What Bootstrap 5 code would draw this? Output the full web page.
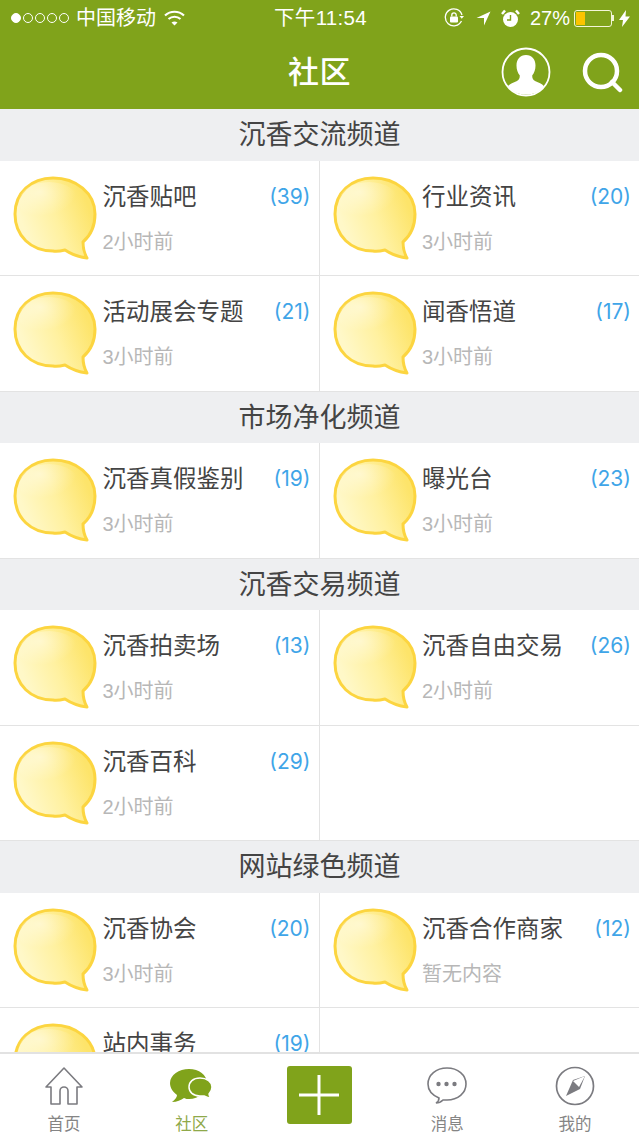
<!DOCTYPE html>
<html lang="zh">
<head>
    <meta charset="UTF-8">
    <meta name="viewport" content="width=device-width, initial-scale=1.0">
    <title>社区</title>
    <link href="https://cdn.jsdelivr.net/npm/bootstrap@5.3.3/dist/css/bootstrap.min.css" rel="stylesheet">
    <style>
        html, body { height: 100%; overflow: hidden; }
        body { font-family: "Liberation Sans", "Noto Sans CJK SC", sans-serif; background: #fff; }
        .app-shell { height: 1136px; }
        .top-area { background: #80a31b; height: 109px; color: #fff; flex: none; }
        .status-line { height: 36px; padding: 0 9px 0 11px; font-size: 20px; white-space: nowrap; }
        .status-side { width: 225px; }
        .status-time { font-size: 20.500px; letter-spacing: .3px; }
        .sig-dot { width: 10px; height: 10px; border: 1px solid #fff; border-radius: 50%; margin-right: 2px; }
        .sig-dot.on { background: #fff; }
        .carrier { margin-left: 5px; }
        .batt { width: 38px; height: 17px; border: 1px solid #f3f6d8; border-radius: 3px; padding: 1px; margin-left: 4px; }
        .batt-fill { width: 27%; height: 100%; background: #fbc400; }
        .batt-tip { width: 2px; height: 6px; background: #f3f6d8; }
        .title-line { height: 73px; }
        .title-text { font-size: 31px; font-weight: 500; line-height: 1; letter-spacing: .5px; }
        .head-icons { right: 16px; top: 11px; gap: 31px; }
        .scroll-area { flex: 1 1 auto; min-height: 0; overflow: hidden; }
        .sec-head { height: 51.5px; background: #eeeff1; color: #444; font-size: 27px; line-height: 53px; text-align: center; }
        .cell { height: 115.5px; border-bottom: 1px solid #e3e3e3; padding: 15px 8px 0 13px; }
        .cell.with-line { border-right: 1px solid #e3e3e3; }
        .bubble { width: 84px; height: 84px; flex: none; margin-right: 5.500px; }
        .cell-title { font-size: 23.5px; line-height: 30px; color: #444; margin-top: 6px; white-space: nowrap; }
        .cell-count { font-family: Inter, "Liberation Sans", sans-serif; font-size: 21px; line-height: 30px; color: #3fa5e8; margin-top: 6px; }
        .cell-time { font-size: 20px; line-height: 28px; color: #b7b7b7; margin-top: 16px; }
        .tab-bar { height: 84px; flex: none; border-top: 2px solid #e2e2e2; background: #fff; padding: 12px 0 0 0; position: relative; z-index: 2; }
        .tab-item { width: 20%; color: #858585; font-size: 16.5px; line-height: 20px; text-align: center; }
        .tab-item.active { color: #8fa94a; }
        .tab-icon { height: 40px; margin-bottom: 8px; }
        .plus-btn { width: 65px; height: 58px; background: #80a31b; border-radius: 3px; }
    </style>
</head>
<body>
    <svg width="0" height="0" class="position-absolute">
        <defs>
            <linearGradient id="bubbleFill" x1="10%" y1="60%" x2="90%" y2="30%">
                <stop offset="0" stop-color="#fff8c8"/>
                <stop offset=".5" stop-color="#fff1a0"/>
                <stop offset="1" stop-color="#fde46a"/>
            </linearGradient>
            <radialGradient id="bubbleShine" cx="35%" cy="25%" r="60%">
                <stop offset="0" stop-color="#fff" stop-opacity=".45"/>
                <stop offset="1" stop-color="#fff" stop-opacity="0"/>
            </radialGradient>
            <symbol id="bubbleIcon" viewBox="0 0 84 84">
                <path d="M40 2C63 2 82 17 82 38c0 13-5 22-12 28 0 6 1 11 4 16-8-1-16-4-22-8-4 1-8 2-12 1C18 75 2 60 2 38 2 17 18 2 40 2z" fill="url(#bubbleFill)" stroke="#fcd540" stroke-width="3" stroke-linejoin="round"/>
                <ellipse cx="36" cy="26" rx="30" ry="20" fill="url(#bubbleShine)"/>
            </symbol>
        </defs>
    </svg>

    <div class="app-shell d-flex flex-column">
        <div class="top-area">
            <div class="status-line d-flex align-items-center justify-content-between">
                <div class="status-side d-flex align-items-center">
                    <span class="sig-dot on"></span><span class="sig-dot"></span><span class="sig-dot"></span><span class="sig-dot"></span><span class="sig-dot"></span>
                    <span class="carrier">中国移动</span>
                    <svg class="ms-2" width="21" height="16" viewBox="0 0 21 16" fill="none" stroke="#fff" stroke-width="2.2"><path d="M1 5.5c5.500-5 13.500-5 19 0"/><path d="M4.500 9c3.500-3 8.500-3 12 0"/><path d="M10.500 15.500l-3-3c2-1.400 4-1.400 6 0z" fill="#fff" stroke="none"/></svg>
                </div>
                <div class="status-time">下午11:54</div>
                <div class="status-side d-flex align-items-center justify-content-end">
                    <svg width="21" height="20" viewBox="0 0 21 20" fill="none" stroke="#fff" stroke-width="1.300"><path d="M17.500 13A8.500 8.500 0 1 1 18 7"/><path d="M15.500 8h4.500l-2.200 2.800z" fill="#fff" stroke="none"/><rect x="6" y="8.500" width="8" height="6" rx="1" fill="#fff" stroke="none"/><path d="M7.800 8.500V7a2.200 2.200 0 0 1 4.400 0v1.500"/></svg>
                    <svg width="15" height="15" viewBox="0 0 15 15" style="margin-left:11px"><path d="M14.500.5L8 14.500V7H.5z" fill="#fff"/></svg>
                    <svg width="19" height="19" viewBox="0 0 19 19" style="margin-left:10px"><circle cx="9.500" cy="10.500" r="7.500" fill="#fff"/><path d="M9.500 6v5H6" fill="none" stroke="#80a31b" stroke-width="1.400"/><path d="M1 5l3-3.500M18 5l-3-3.500" stroke="#fff" stroke-width="2.500"/></svg>
                    <span style="margin-left:10px">27%</span>
                    <div class="batt"><div class="batt-fill"></div></div><span class="batt-tip"></span>
                    <svg width="11" height="17" viewBox="0 0 11 17" style="margin-left:5px"><path d="M7 0L0 10h4l-1 7 8-10.500H6.500z" fill="#fff"/></svg>
                </div>
            </div>
            <div class="title-line position-relative d-flex align-items-center justify-content-center">
                <span class="title-text">社区</span>
                <div class="head-icons position-absolute d-flex align-items-center">
                    <svg width="50" height="50" viewBox="0 0 50 50"><circle cx="25" cy="25" r="23.500" fill="#80a31b" stroke="#fff" stroke-width="1.800"/><path d="M25 8c6 0 9.500 4.500 9.500 10.500 0 4-1.200 7.500-3.300 10 0 3 .8 4.500 3.300 5.700 3 1.400 6.500 2.300 8.500 5C39.500 44.700 33 47.500 25 47.500s-14.500-2.800-18-8.300c2-2.700 5.500-3.600 8.500-5 2.500-1.200 3.300-2.700 3.300-5.700-2.100-2.500-3.300-6-3.300-10C15.500 12.500 19 8 25 8z" fill="#fff"/></svg>
                    <svg width="41" height="41" viewBox="0 0 41 41" fill="none" stroke="#fff" stroke-width="4.500"><circle cx="19" cy="19" r="16"/><path d="M30 30l8 8" stroke-linecap="round"/></svg>
                </div>
            </div>
        </div>

        <div class="scroll-area">
            <div class="sec-head">沉香交流频道</div>
            <div class="row g-0">
                <div class="col-6 cell with-line d-flex">
                    <svg class="bubble"><use href="#bubbleIcon"/></svg>
                    <div class="flex-grow-1"><div class="d-flex justify-content-between"><span class="cell-title">沉香贴吧</span><span class="cell-count">(39)</span></div><div class="cell-time">2小时前</div></div>
                </div>
                <div class="col-6 cell d-flex">
                    <svg class="bubble"><use href="#bubbleIcon"/></svg>
                    <div class="flex-grow-1"><div class="d-flex justify-content-between"><span class="cell-title">行业资讯</span><span class="cell-count">(20)</span></div><div class="cell-time">3小时前</div></div>
                </div>
                <div class="col-6 cell with-line d-flex">
                    <svg class="bubble"><use href="#bubbleIcon"/></svg>
                    <div class="flex-grow-1"><div class="d-flex justify-content-between"><span class="cell-title">活动展会专题</span><span class="cell-count">(21)</span></div><div class="cell-time">3小时前</div></div>
                </div>
                <div class="col-6 cell d-flex">
                    <svg class="bubble"><use href="#bubbleIcon"/></svg>
                    <div class="flex-grow-1"><div class="d-flex justify-content-between"><span class="cell-title">闻香悟道</span><span class="cell-count">(17)</span></div><div class="cell-time">3小时前</div></div>
                </div>
            </div>

            <div class="sec-head">市场净化频道</div>
            <div class="row g-0">
                <div class="col-6 cell with-line d-flex">
                    <svg class="bubble"><use href="#bubbleIcon"/></svg>
                    <div class="flex-grow-1"><div class="d-flex justify-content-between"><span class="cell-title">沉香真假鉴别</span><span class="cell-count">(19)</span></div><div class="cell-time">3小时前</div></div>
                </div>
                <div class="col-6 cell d-flex">
                    <svg class="bubble"><use href="#bubbleIcon"/></svg>
                    <div class="flex-grow-1"><div class="d-flex justify-content-between"><span class="cell-title">曝光台</span><span class="cell-count">(23)</span></div><div class="cell-time">3小时前</div></div>
                </div>
            </div>

            <div class="sec-head">沉香交易频道</div>
            <div class="row g-0">
                <div class="col-6 cell with-line d-flex">
                    <svg class="bubble"><use href="#bubbleIcon"/></svg>
                    <div class="flex-grow-1"><div class="d-flex justify-content-between"><span class="cell-title">沉香拍卖场</span><span class="cell-count">(13)</span></div><div class="cell-time">3小时前</div></div>
                </div>
                <div class="col-6 cell d-flex">
                    <svg class="bubble"><use href="#bubbleIcon"/></svg>
                    <div class="flex-grow-1"><div class="d-flex justify-content-between"><span class="cell-title">沉香自由交易</span><span class="cell-count">(26)</span></div><div class="cell-time">2小时前</div></div>
                </div>
                <div class="col-6 cell with-line d-flex">
                    <svg class="bubble"><use href="#bubbleIcon"/></svg>
                    <div class="flex-grow-1"><div class="d-flex justify-content-between"><span class="cell-title">沉香百科</span><span class="cell-count">(29)</span></div><div class="cell-time">2小时前</div></div>
                </div>
                <div class="col-6 cell"></div>
            </div>

            <div class="sec-head">网站绿色频道</div>
            <div class="row g-0">
                <div class="col-6 cell with-line d-flex">
                    <svg class="bubble"><use href="#bubbleIcon"/></svg>
                    <div class="flex-grow-1"><div class="d-flex justify-content-between"><span class="cell-title">沉香协会</span><span class="cell-count">(20)</span></div><div class="cell-time">3小时前</div></div>
                </div>
                <div class="col-6 cell d-flex">
                    <svg class="bubble"><use href="#bubbleIcon"/></svg>
                    <div class="flex-grow-1"><div class="d-flex justify-content-between"><span class="cell-title">沉香合作商家</span><span class="cell-count">(12)</span></div><div class="cell-time">暂无内容</div></div>
                </div>
                <div class="col-6 cell with-line d-flex">
                    <svg class="bubble"><use href="#bubbleIcon"/></svg>
                    <div class="flex-grow-1"><div class="d-flex justify-content-between"><span class="cell-title">站内事务</span><span class="cell-count">(19)</span></div></div>
                </div>
                <div class="col-6 cell"></div>
            </div>
        </div>

        <div class="tab-bar d-flex">
            <div class="tab-item">
                <svg class="tab-icon" width="40" height="40" viewBox="0 0 40 40" fill="none" stroke="#7b7b80" stroke-width="1.600"><path d="M7 21v17h9V25a4 4 0 0 1 8 0v13h9V21h5L20 2 2 21z" stroke-linejoin="round"/></svg>
                <div>首页</div>
            </div>
            <div class="tab-item active">
                <svg class="tab-icon" width="44" height="40" viewBox="0 0 44 40"><path d="M19 3C29 3 37 9 37 17c0 9-8 16-18 16-2 0-3 0-5-1-3 2-7 4-12 4 3-2 5-5 5-7C3 26 0 22 0 17 0 9 9 3 19 3z" fill="#80a31b"/><path d="M30 12c7 0 12 4 12 9 0 3-1 5-3 7 0 2 1 3 2 4-3 0-5-1-7-2-1 0-3 0-4 0-7 0-11-4-11-9s4-9 11-9z" fill="#80a31b" stroke="#fff" stroke-width="1.500"/></svg>
                <div>社区</div>
            </div>
            <div class="tab-item d-flex justify-content-center">
                <div class="plus-btn d-flex align-items-center justify-content-center">
                    <svg width="42" height="42" viewBox="0 0 42 42"><path d="M21 1v40M1 21h40" stroke="#fff" stroke-width="3"/></svg>
                </div>
            </div>
            <div class="tab-item">
                <svg class="tab-icon" width="42" height="40" viewBox="0 0 42 40" fill="none" stroke="#7b7b80" stroke-width="1.600"><path d="M21 2c11 0 19 7 19 16s-8 16-19 16c-1 0-3 0-4 0-2 2-4 3-7 3 2-1 3-3 3-5C6 29 2 24 2 18 2 9 10 2 21 2z"/><circle cx="12.500" cy="18" r="2.200" fill="#7b7b80" stroke="none"/><circle cx="20.500" cy="18" r="2.200" fill="#7b7b80" stroke="none"/><circle cx="28.500" cy="18" r="2.200" fill="#7b7b80" stroke="none"/></svg>
                <div>消息</div>
            </div>
            <div class="tab-item">
                <svg class="tab-icon" width="42" height="40" viewBox="0 0 42 40" fill="none" stroke="#7b7b80" stroke-width="1.700"><circle cx="21" cy="20" r="18.500"/><path d="M31 10L19 14l-7 16 14-7z" fill="#7b7b80" stroke="none"/><path d="M31 10L19 15l6 6z" fill="#fff" stroke="none"/></svg>
                <div>我的</div>
            </div>
        </div>
    </div>
    <script src="https://cdn.jsdelivr.net/npm/bootstrap@5.3.3/dist/js/bootstrap.bundle.min.js"></script>
</body>
</html>
